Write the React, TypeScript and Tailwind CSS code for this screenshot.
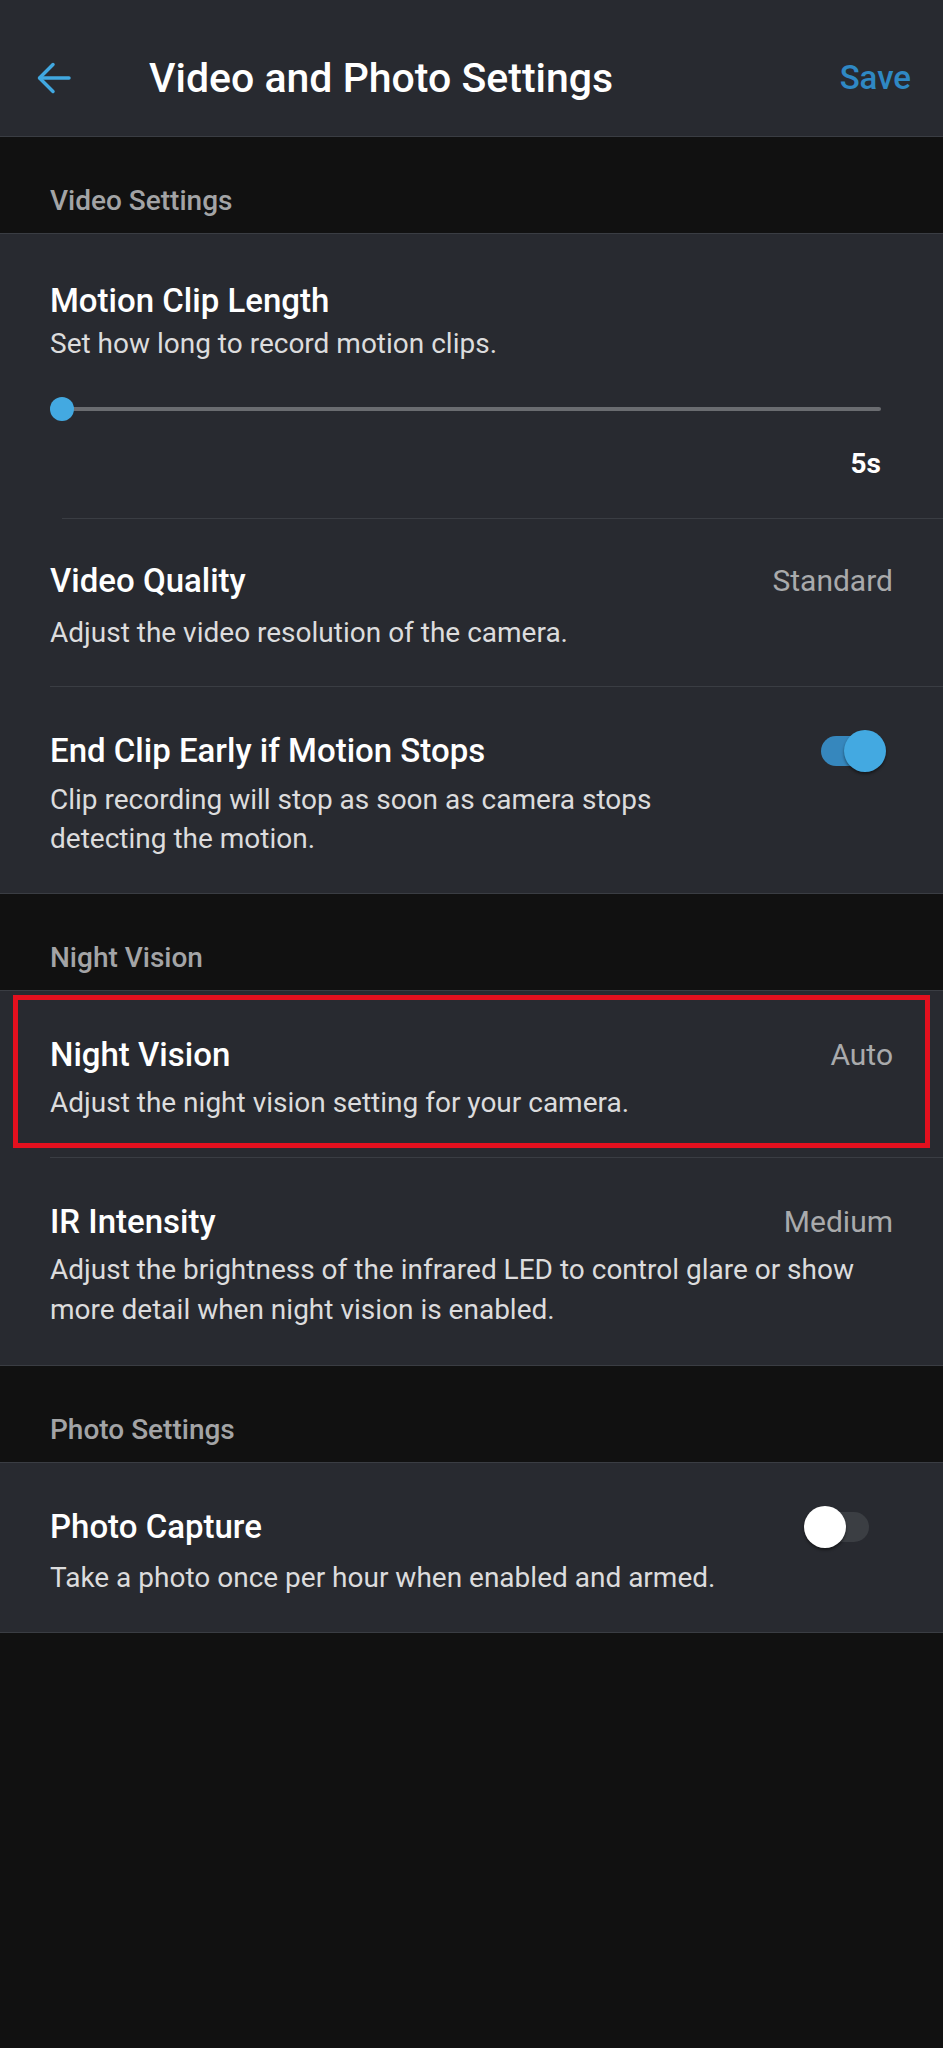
import React from 'react';

const font = { fontFamily: 'Roboto, "Noto Sans", sans-serif' };

const SectionHeader: React.FC<{ label: string }> = ({ label }) => (
  <div className="h-[97px] flex items-end pb-[16px] px-[50px] bg-[#111111] border-b border-[#3a3d43]">
    <span className="text-[28px] leading-[32px] font-medium text-[#a3a4a6]">{label}</span>
  </div>
);

const Toggle: React.FC<{ on: boolean }> = ({ on }) => (
  <div className="relative w-[82px] h-[42px] flex items-center">
    <div className={`absolute left-[17px] w-[48px] h-[30px] rounded-full ${on ? 'bg-[#3687bd]' : 'bg-[#3b3e43]'}`} />
    <div
      className={`absolute w-[42px] h-[42px] rounded-full shadow-[0_2px_3px_rgba(0,0,0,0.45)] ${
        on ? 'left-[40px] bg-[#43a9e1]' : 'left-0 bg-white'
      }`}
    />
  </div>
);

const App: React.FC = () => {
  return (
    <div className="min-h-screen bg-[#111111] text-white" style={font}>
      {/* Header */}
      <div className="h-[137px] pt-[20px] bg-[#282a30] border-b border-[#3a3d43] flex items-center pl-[37px] pr-[32px]">
        <svg width="34" height="32" viewBox="0 0 34 32" fill="none" stroke="#41a8e0" strokeWidth="3.5" strokeLinecap="round" strokeLinejoin="round">
          <path d="M32 16H3" />
          <path d="M16 2.5L2.5 16L16 29.5" />
        </svg>
        <h1 className="ml-[78px] text-[41px] leading-[48px] font-medium text-white">Video and Photo Settings</h1>
        <span className="ml-auto text-[33px] leading-[40px] font-medium text-[#2f88c4]">Save</span>
      </div>

      <SectionHeader label="Video Settings" />

      <div className="bg-[#282a30] border-b border-[#3a3d43]">
        {/* Motion Clip Length */}
        <div className="pt-[47px] pb-[36px] pl-[50px] pr-[62px]">
          <div className="text-[33px] leading-[40px] font-medium">Motion Clip Length</div>
          <div className="mt-[5px] text-[28px] leading-[36px] text-[#dcdcdd]">Set how long to record motion clips.</div>
          <div className="mt-[35px] relative h-[24px] flex items-center">
            <div className="ml-[12px] flex-1 h-[4px] bg-[#6a6c70] rounded-full" />
            <div className="absolute left-0 top-0 w-[24px] h-[24px] rounded-full bg-[#43a9e1]" />
          </div>
          <div className="mt-[25px] text-right text-[28px] leading-[36px] font-bold">5s</div>
        </div>
        <div className="ml-[62px] h-px bg-[#3a3d43]" />

        {/* Video Quality */}
        <div className="pt-[42px] pb-[35px] px-[50px]">
          <div className="flex items-center justify-between">
            <span className="text-[33px] leading-[40px] font-medium">Video Quality</span>
            <span className="text-[30px] leading-[40px] text-[#a9aaac]">Standard</span>
          </div>
          <div className="mt-[14px] text-[28px] leading-[36px] text-[#dcdcdd]">Adjust the video resolution of the camera.</div>
        </div>
        <div className="ml-[50px] h-px bg-[#3a3d43]" />

        {/* End Clip Early */}
        <div className="pt-[43px] pb-[35px] pl-[50px] pr-[57px]">
          <div className="flex items-center justify-between">
            <span className="text-[33px] leading-[40px] font-medium">End Clip Early if Motion Stops</span>
            <Toggle on />
          </div>
          <div className="mt-[8px] max-w-[640px] text-[28px] leading-[39px] text-[#dcdcdd]">
            Clip recording will stop as soon as camera stops detecting the motion.
          </div>
        </div>
      </div>

      <SectionHeader label="Night Vision" />

      <div className="bg-[#282a30] border-b border-[#3a3d43]">
        {/* Night Vision */}
        <div className="relative pt-[44px] pb-[36px] px-[50px]">
          <div className="flex items-center justify-between">
            <span className="text-[33px] leading-[40px] font-medium">Night Vision</span>
            <span className="text-[30px] leading-[40px] text-[#a9aaac]">Auto</span>
          </div>
          <div className="mt-[10px] text-[28px] leading-[36px] text-[#dcdcdd]">Adjust the night vision setting for your camera.</div>
          <div className="absolute left-[13px] right-[13px] top-[4px] bottom-[9px] border-[5px] border-[#e3101e]" />
        </div>
        <div className="ml-[50px] h-px bg-[#3a3d43]" />

        {/* IR Intensity */}
        <div className="pt-[44px] pb-[35px] px-[50px]">
          <div className="flex items-center justify-between">
            <span className="text-[33px] leading-[40px] font-medium">IR Intensity</span>
            <span className="text-[30px] leading-[40px] text-[#a9aaac]">Medium</span>
          </div>
          <div className="mt-[8px] text-[28px] leading-[40px] text-[#dcdcdd]">
            Adjust the brightness of the infrared LED to control glare or show more detail when night vision is enabled.
          </div>
        </div>
      </div>

      <SectionHeader label="Photo Settings" />

      <div className="bg-[#282a30] border-b border-[#3a3d43]">
        {/* Photo Capture */}
        <div className="pt-[43px] pb-[36px] pl-[50px] pr-[57px]">
          <div className="flex items-center justify-between">
            <span className="text-[33px] leading-[40px] font-medium">Photo Capture</span>
            <Toggle on={false} />
          </div>
          <div className="mt-[12px] text-[28px] leading-[36px] text-[#dcdcdd]">Take a photo once per hour when enabled and armed.</div>
        </div>
      </div>
    </div>
  );
};

export default App;
